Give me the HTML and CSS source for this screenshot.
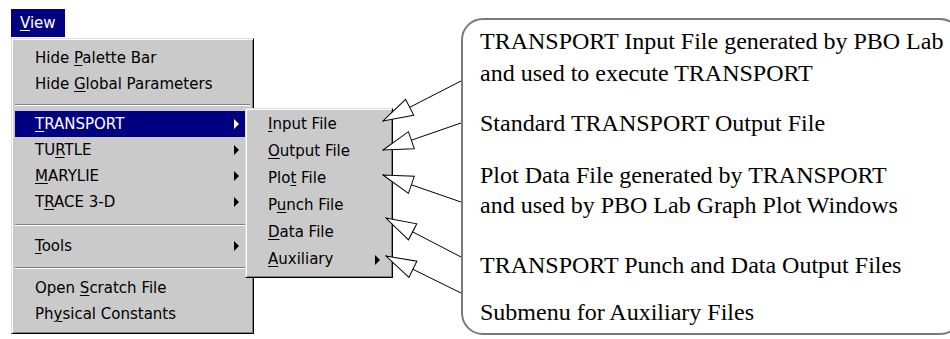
FILE: index.html
```html
<!DOCTYPE html>
<html lang="en">
<head>
    <meta charset="UTF-8">
    <title>PBO Lab View menu</title>
    <link rel="stylesheet" href="styles.css">
</head>
<body>
    <div class="page">
        <div class="menus">
            <div class="menubar">
                <span class="title"><u>V</u>iew</span>
            </div>
            <div class="menu main_menu">
                <div class="item">Hide <u>P</u>alette Bar</div>
                <div class="item">Hide <u>G</u>lobal Parameters</div>
                <div class="sep sep1"></div>
                <div class="item sub active"><u>T</u>RANSPORT</div>
                <div class="item sub">TU<u>R</u>TLE</div>
                <div class="item sub"><u>M</u>ARYLIE</div>
                <div class="item sub">T<u>R</u>ACE 3-D</div>
                <div class="sep sep2"></div>
                <div class="item sub"><u>T</u>ools</div>
                <div class="sep sep3"></div>
                <div class="item">Open <u>S</u>cratch File</div>
                <div class="item">Ph<u>y</u>sical Constants</div>
            </div>
        </div>

        <div class="menu sub_menu">
            <div class="item"><u>I</u>nput File</div>
            <div class="item"><u>O</u>utput File</div>
            <div class="item">Plo<u>t</u> File</div>
            <div class="item">P<u>u</u>nch File</div>
            <div class="item"><u>D</u>ata File</div>
            <div class="item sub"><u>A</u>uxiliary</div>
        </div>

        <div class="callout">
            <p class="note note_input">TRANSPORT Input File generated by PBO Lab<br>and used to execute TRANSPORT</p>
            <p class="note note_output">Standard TRANSPORT Output File</p>
            <p class="note note_plot">Plot Data File generated by TRANSPORT<br>and used by PBO Lab Graph Plot Windows</p>
            <p class="note note_punch">TRANSPORT Punch and Data Output Files</p>
            <p class="note note_aux">Submenu for Auxiliary Files</p>
        </div>

        <!-- leader arrows from the notes to the submenu entries -->
        <svg class="arrows" width="950" height="339" viewBox="0 0 950 339">
            <defs>
                <marker id="head" markerUnits="userSpaceOnUse" markerWidth="32" markerHeight="22"
                        viewBox="-1 -11 32 22" refX="30" refY="0" orient="auto">
                    <path d="M0,-9 L30,0 L0,9 Z" fill="#fff" stroke="#000" stroke-width="1"/>
                </marker>
            </defs>
            <g stroke="#000" stroke-width="1" marker-end="url(#head)">
                <line x1="461" y1="81" x2="383" y2="121"/>
                <line x1="461" y1="123" x2="383" y2="150"/>
                <line x1="461" y1="202" x2="383" y2="175"/>
                <line x1="461" y1="257" x2="386" y2="218"/>
                <line x1="461" y1="293" x2="386" y2="256"/>
            </g>
        </svg>
    </div>
</body>
</html>
```

FILE: styles.css
```css
* {
    padding: 0;
    margin: 0;
    box-sizing: border-box;
}

html, body {
    width: 950px;
    height: 339px;
    overflow: hidden;
    background: #fff;
}

.page {
    position: relative;
    display: flex;
    width: 950px;
    height: 339px;
}

.menus {
    flex: 0 0 461px;
    padding: 9px 0 0 11px;
    font-family: "DejaVu Sans", sans-serif;
    font-size: 15px;
}

u {
    text-decoration-thickness: 1px;
    text-underline-offset: 2px;
}

.menubar {
    height: 29px;
}

.title {
    display: inline-block;
    width: 54px;
    height: 28px;
    line-height: 28px;
    padding-left: 9px;
    background: #000080;
    color: #fff;
}

.menu {
    background: #cacaca;
    border: 1px solid;
    border-color: #dcdcdc #000 #000 #dcdcdc;
    box-shadow: inset 1px 1px #fff, inset -1px -1px #808080;
    font-family: "DejaVu Sans", sans-serif;
    font-size: 15px;
    color: #000;
}

.main_menu {
    width: 243px;
    height: 296px;
    padding: 6px 3px 5px;
}

.item {
    position: relative;
    height: 26px;
    line-height: 26px;
    padding-left: 20px;
    white-space: nowrap;
}

.item.sub::after {
    content: "";
    position: absolute;
    right: 11px;
    top: 8px;
    border-left: 5px solid #000;
    border-top: 5px solid transparent;
    border-bottom: 5px solid transparent;
}

.item.active {
    background: #000080;
    color: #fff;
}

.item.active::after {
    border-left-color: #fff;
}

.sep {
    position: relative;
}

.sep::before {
    content: "";
    position: absolute;
    left: 0;
    right: 0;
    top: 50%;
    border-top: 1px solid #808080;
    border-bottom: 1px solid #fff;
}

.sep1 { height: 14px; }
.sep2 { height: 18px; }
.sep3 { height: 16px; }

.sub_menu {
    position: absolute;
    left: 245px;
    top: 108px;
    width: 148px;
    height: 170px;
    padding: 2px 3px 3px;
}

.sub_menu .item {
    height: 27px;
    line-height: 27px;
    padding-left: 19px;
}

.sub_menu .item.sub::after {
    right: 9px;
    top: 9px;
}

.callout {
    flex: 0 0 501px;
    margin-top: 18px;
    height: 317px;
    border: 2px solid #7a7a7a;
    border-radius: 22px;
    padding: 5px 0 0 17px;
    font-family: "Liberation Serif", "Times New Roman", serif;
    font-size: 24px;
    line-height: 30px;
    color: #000;
}

.note {
    white-space: nowrap;
}

.note_input { line-height: 32px; }
.note_output { margin-top: 19px; }
.note_plot { margin-top: 22px; }
.note_punch { margin-top: 30px; }
.note_aux { margin-top: 17px; }

.arrows {
    position: absolute;
    left: 0;
    top: 0;
    pointer-events: none;
}
```
